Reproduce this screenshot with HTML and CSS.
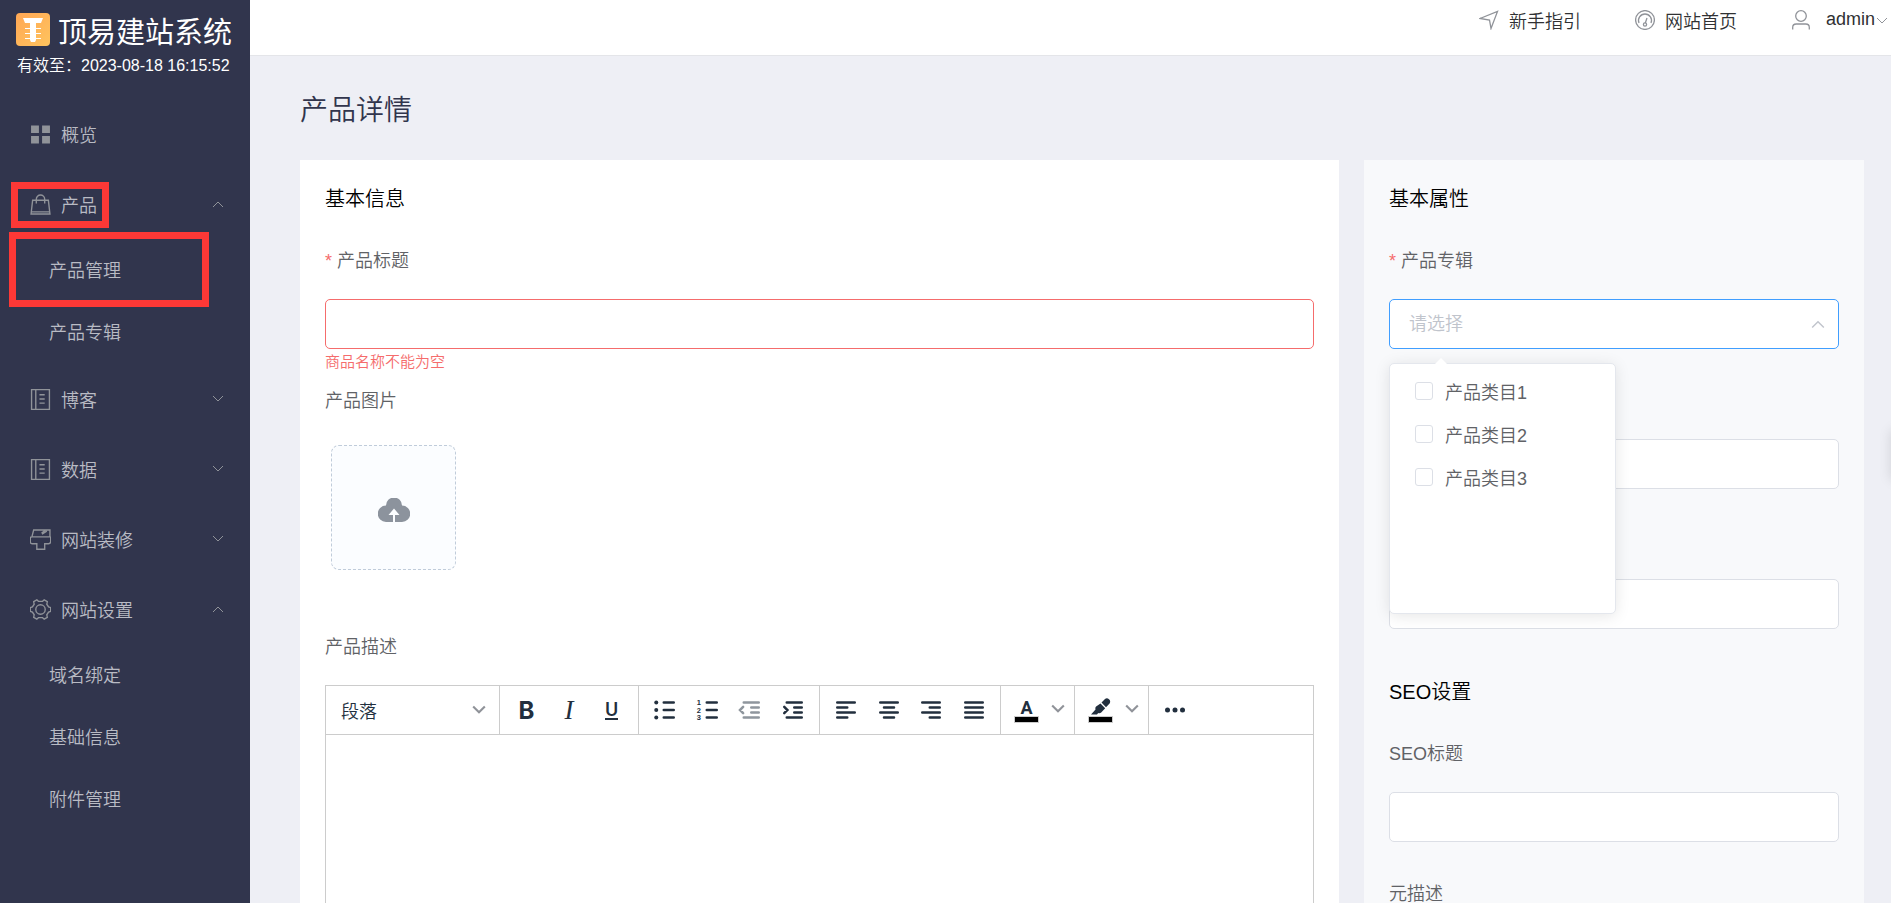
FILE: index.html
```
<!DOCTYPE html>
<html lang="zh-CN">
<head>
    <meta charset="UTF-8">
    <meta name="viewport" content="width=device-width, initial-scale=1.0">
    <title>产品详情</title>
    <link rel="stylesheet" href="styles.css">
</head>
<body>
    <div class="app">
        <aside class="sidebar">
            <div class="brand">
                <svg class="brand-logo" viewBox="0 0 34 34">
                    <defs>
                        <linearGradient id="logoFill" x1="0" y1="0" x2="1" y2="1">
                            <stop offset="0" stop-color="#ffa755"/>
                            <stop offset="1" stop-color="#ffc45e"/>
                        </linearGradient>
                    </defs>
                    <rect width="34" height="33" rx="4" fill="url(#logoFill)"/>
                    <path d="M7 5h20l-2 5h-5v17l-1 2h-4l-1-2V10H9z" fill="#fff"/>
                    <path d="M9 15.500h16M9 20.500h16M9 25.500h16" stroke="#fff" stroke-width="1"/>
                </svg>
                <span class="brand-name">顶易建站系统</span>
            </div>
            <div class="expire">有效至：2023-08-18 16:15:52</div>

            <nav class="menu">
                <a href="#" class="menu-item">
                    <svg class="icon" viewBox="0 0 20 20"><path d="M1 1.500h7.500v7H1zM11.500 1.500H19v7h-7.500zM1 11.500h7.500v7H1zM11.500 11.500H19v7h-7.500z" fill="currentColor" stroke="none"/></svg>
                    <span>概览</span>
                </a>
                <button type="button" class="menu-item">
                    <svg class="icon" viewBox="0 0 20 20"><path d="M2.500 6h15L19 19H1zM6 9V5a4 4 0 0 1 8 0v4M1 17h18"/></svg>
                    <span>产品</span>
                    <svg class="arrow" viewBox="0 0 12 12"><path d="M1 9l5-5 5 5"/></svg>
                    <i class="mark mark-group"></i>
                </button>
                <div class="submenu">
                    <a href="#" class="submenu-item">产品管理<i class="mark mark-link"></i></a>
                    <a href="#" class="submenu-item">产品专辑</a>
                </div>
                <button type="button" class="menu-item">
                    <svg class="icon" viewBox="0 0 20 20"><path d="M1.500.5h17v19h-17zM5.500.5v19M9 5.500h5M9 9.500h5M9 13.500h5"/></svg>
                    <span>博客</span>
                    <svg class="arrow" viewBox="0 0 12 12"><path d="M1 3l5 5 5-5"/></svg>
                </button>
                <button type="button" class="menu-item">
                    <svg class="icon" viewBox="0 0 20 20"><path d="M1.500.5h17v19h-17zM5.500.5v19M9 5.500h5M9 9.500h5M9 13.500h5"/></svg>
                    <span>数据</span>
                    <svg class="arrow" viewBox="0 0 12 12"><path d="M1 3l5 5 5-5"/></svg>
                </button>
                <button type="button" class="menu-item">
                    <svg class="icon" viewBox="0 0 20 20"><path d="M3.500 1h15.500v6.500q.7 0 .7 1v3.500q0 2-2 2H14v5.300H6.500V14H2.300q-2 0-2-2V8.500q0-1 1.500-1zM1.800 7.500H19M15 1l-3.500 2.500.5 1L16 2"/></svg>
                    <span>网站装修</span>
                    <svg class="arrow" viewBox="0 0 12 12"><path d="M1 3l5 5 5-5"/></svg>
                </button>
                <button type="button" class="menu-item">
                    <svg class="icon" viewBox="0 0 20 20"><circle cx="10" cy="10" r="4.500"/><path d="M6.500.8 8 2.200h4L13.500.8 16.500 2.500 16 5l1.700 2.500 2 .8v3.400l-2 .8L16 15l.5 2.500-3 1.700L12 17.800H8l-1.500 1.400-3-1.700L4 15l-1.700-2.500-2-.8V8.300l2-.8L4 5l-.5-2.500z"/></svg>
                    <span>网站设置</span>
                    <svg class="arrow" viewBox="0 0 12 12"><path d="M1 9l5-5 5 5"/></svg>
                </button>
                <div class="submenu">
                    <a href="#" class="submenu-item">域名绑定</a>
                    <a href="#" class="submenu-item">基础信息</a>
                    <a href="#" class="submenu-item">附件管理</a>
                </div>
            </nav>
        </aside>

        <div class="page">
            <header class="topbar">
                <a href="#" class="top-link">
                    <svg class="icon" viewBox="0 0 20 20"><path d="M1 8.500 18.500 1.500 12 18.500 10.500 10z"/></svg>
                    <span>新手指引</span>
                </a>
                <a href="#" class="top-link">
                    <svg class="icon" viewBox="0 0 20 20"><circle cx="10" cy="10" r="9.400"/><path d="M4 13a6.500 6.500 0 1 1 12 0M10.300 13 12 8"/><circle cx="10" cy="14.500" r="1.600"/></svg>
                    <span>网站首页</span>
                </a>
                <button type="button" class="top-link user">
                    <svg class="icon" viewBox="0 0 20 20"><circle cx="10" cy="6" r="5.300"/><path d="M1.700 19.500v-2q0-3.500 3.500-3.500h9.600q3.500 0 3.500 3.500v2"/></svg>
                    <span>admin</span>
                    <svg class="arrow" viewBox="0 0 12 12"><path d="M1 4l5 5 5-5"/></svg>
                </button>
            </header>

            <main class="content">
                <h1>产品详情</h1>
                <form class="columns">
                    <section class="card card-main">
                        <h2>基本信息</h2>
                        <div class="form-item">
                            <label for="title" class="required">产品标题</label>
                            <input type="text" id="title" name="title" class="field is-error">
                            <div class="error">商品名称不能为空</div>
                        </div>
                        <div class="form-item">
                            <label for="picture">产品图片</label>
                            <div class="upload-wrap">
                                <button type="button" id="picture" class="upload">
                                    <svg viewBox="0 0 32 24"><path d="M8 7.500a8 8 0 0 1 16 0A8.200 8.200 0 0 1 24 24h-7V17h4.500L16 10.500 10.500 17H15v7H8A8.200 8.200 0 0 1 8 7.500z"/></svg>
                                </button>
                            </div>
                        </div>
                        <div class="form-item">
                            <label for="description">产品描述</label>
                            <div class="editor">
                                <div class="toolbar">
                                    <div class="group group-format">
                                        <button type="button" class="format">段落
                                            <svg class="caret" viewBox="0 0 12 12"><path d="M1 3l5 5 5-5"/></svg>
                                        </button>
                                    </div>
                                    <div class="group group-3">
                                        <button type="button" class="tool bold">B</button>
                                        <button type="button" class="tool italic">I</button>
                                        <button type="button" class="tool underline"><span>U</span></button>
                                    </div>
                                    <div class="group group-4">
                                        <button type="button" class="tool"><svg viewBox="0 0 24 24"><path d="M11 6h8M11 12h8M11 18h8"/><g class="solid"><circle cx="5" cy="6" r="1.600"/><circle cx="5" cy="12" r="1.600"/><circle cx="5" cy="18" r="1.600"/></g></svg></button>
                                        <button type="button" class="tool"><svg viewBox="0 0 24 24"><path d="M11 6h8M11 12h8M11 18h8"/><g class="digits"><text x="3" y="8">1</text><text x="3" y="14">2</text><text x="3" y="20">3</text></g></svg></button>
                                        <button type="button" class="tool" disabled><svg viewBox="0 0 24 24"><path d="M7 6h12M13 10h6M13 14h6M7 18h12M6.500 9.500 4 12l2.500 2.500"/></svg></button>
                                        <button type="button" class="tool"><svg viewBox="0 0 24 24"><path d="M7 6h12M13 10h6M13 14h6M7 18h12M5 9.500 7.500 12 5 14.500"/></svg></button>
                                    </div>
                                    <div class="group group-4">
                                        <button type="button" class="tool"><svg viewBox="0 0 24 24"><path d="M5 6h14M5 10h8M5 14h14M5 18h8"/></svg></button>
                                        <button type="button" class="tool"><svg viewBox="0 0 24 24"><path d="M5 6h14M8 10h8M5 14h14M8 18h8"/></svg></button>
                                        <button type="button" class="tool"><svg viewBox="0 0 24 24"><path d="M5 6h14M11 10h8M5 14h14M11 18h8"/></svg></button>
                                        <button type="button" class="tool"><svg viewBox="0 0 24 24"><path d="M5 6h14M5 10h14M5 14h14M5 18h14"/></svg></button>
                                    </div>
                                    <div class="group group-color">
                                        <button type="button" class="tool color"><span>A</span></button>
                                        <button type="button" class="more"><svg class="caret" viewBox="0 0 12 12"><path d="M1 3l5 5 5-5"/></svg></button>
                                    </div>
                                    <div class="group group-color">
                                        <button type="button" class="tool color">
                                            <svg class="pen" viewBox="0 0 20 18"><path d="M10.500 4.500 14 1q2-1.600 4 .2t.6 4.300L15 9.200zM9.500 5.500l4.700 4.700-4 4.300q-1.300 1.200-3 .5L6 16.500H0l4.500-5q-.5-2 .6-3z"/></svg>
                                        </button>
                                        <button type="button" class="more"><svg class="caret" viewBox="0 0 12 12"><path d="M1 3l5 5 5-5"/></svg></button>
                                    </div>
                                    <div class="group group-last">
                                        <button type="button" class="tool"><svg viewBox="0 0 24 24"><g class="solid"><circle cx="6" cy="12" r="2"/><circle cx="12" cy="12" r="2"/><circle cx="18" cy="12" r="2"/></g></svg></button>
                                    </div>
                                </div>
                                <textarea id="description" name="description" class="editor-body"></textarea>
                            </div>
                        </div>
                    </section>

                    <section class="card card-side">
                        <h2>基本属性</h2>
                        <div class="form-item">
                            <label for="album" class="required">产品专辑</label>
                            <div class="select-box">
                                <select id="album" name="album" class="field is-focus">
                                    <option value="">请选择</option>
                                </select>
                                <svg class="caret" viewBox="0 0 12 12"><path d="M1 9l5-5 5 5"/></svg>
                                <div class="dropdown">
                                    <label class="option"><input type="checkbox" name="category" value="1">产品类目1</label>
                                    <label class="option"><input type="checkbox" name="category" value="2">产品类目2</label>
                                    <label class="option"><input type="checkbox" name="category" value="3">产品类目3</label>
                                </div>
                            </div>
                        </div>
                        <div class="form-item">
                            <label for="attr1"></label>
                            <input type="text" id="attr1" name="attr1" class="field">
                        </div>
                        <div class="form-item">
                            <label for="attr2"></label>
                            <input type="text" id="attr2" name="attr2" class="field">
                        </div>
                        <h2 class="next-title">SEO设置</h2>
                        <div class="form-item">
                            <label for="seo_title">SEO标题</label>
                            <input type="text" id="seo_title" name="seo_title" class="field">
                        </div>
                        <div class="form-item">
                            <label for="seo_desc">元描述</label>
                            <input type="text" id="seo_desc" name="seo_desc" class="field">
                        </div>
                    </section>
                </form>
            </main>
        </div>
    </div>
    <div class="side-float"></div>
</body>
</html>
```

FILE: styles.css
```
* {
    box-sizing: border-box;
}

body {
    margin: 0;
    font-family: "Liberation Sans", "Noto Sans CJK SC", sans-serif;
    font-size: 18px;
    font-weight: 350;
    color: #606266;
    overflow: hidden;
}

a {
    color: inherit;
    text-decoration: none;
}

button,
input,
select,
textarea {
    font: inherit;
    color: inherit;
}

button {
    padding: 0;
    border: none;
    background: none;
    cursor: pointer;
}

svg {
    flex: none;
    fill: none;
    stroke: currentColor;
}

.app {
    display: flex;
    height: 100vh;
}

/* sidebar */
.sidebar {
    flex: none;
    width: 250px;
    background-color: #31354d;
    color: #b9bbc4;
    overflow: hidden;
}

.brand {
    display: flex;
    align-items: center;
    gap: 8px;
    height: 52px;
    padding: 7px 0 0 16px;
    color: #fff;
}

.brand-logo {
    width: 34px;
    height: 34px;
    stroke: none;
}

.brand-name {
    font-size: 29px;
    font-weight: 400;
    white-space: nowrap;
}

.expire {
    padding-left: 17px;
    font-size: 16px;
    line-height: 27px;
    color: #fff;
    white-space: nowrap;
}

.menu {
    padding-top: 20px;
}

.menu-item {
    position: relative;
    display: flex;
    align-items: center;
    gap: 10px;
    width: 100%;
    height: 70px;
    padding: 0 26px 0 30px;
}

.icon {
    width: 20px;
    height: 20px;
    color: #909399;
    stroke-width: 1.3;
}

.menu-item .icon {
    width: 21px;
    height: 21px;
}

.arrow {
    width: 12px;
    height: 12px;
    color: #909399;
}

.menu-item .arrow {
    margin-left: auto;
}

.submenu {
    padding-top: 1px;
}

.submenu-item {
    position: relative;
    display: block;
    padding-left: 49px;
    line-height: 62px;
}

.mark {
    position: absolute;
    border: 7px solid #fd3836;
}

.mark-group {
    top: 13px;
    left: 11px;
    width: 98px;
    height: 46px;
}

.mark-link {
    top: -8px;
    left: 9px;
    width: 200px;
    height: 75px;
}

/* top bar */
.page {
    flex: 1;
    min-width: 0;
    display: flex;
    flex-direction: column;
    background-color: #eeeff5;
}

.topbar {
    flex: none;
    display: flex;
    justify-content: flex-end;
    align-items: flex-start;
    gap: 54px;
    height: 56px;
    padding-right: 3px;
    background-color: #fff;
    border-bottom: 1px solid #e4e5e9;
    color: #303133;
}

.top-link {
    display: flex;
    align-items: center;
    gap: 10px;
    height: 39px;
}

.user {
    gap: 15px;
}

.user .arrow {
    margin-left: -14px;
}

/* content */
.content {
    flex: 1;
    min-height: 0;
    padding: 35px 27px 0 50px;
    overflow-y: auto;
    scrollbar-width: none;
}

h1 {
    margin: 0 0 29px;
    font-size: 28px;
    font-weight: 350;
    line-height: 40px;
    color: #31354d;
}

.columns {
    display: flex;
    align-items: flex-start;
    gap: 25px;
}

.card {
    padding: 25px;
}

.card-main {
    flex: 1;
    min-width: 0;
    background-color: #fff;
}

.card-side {
    flex: none;
    width: 500px;
    background-color: #f8f9fb;
}

h2 {
    margin: 0 0 23px;
    font-size: 20px;
    font-weight: 350;
    line-height: 28px;
    color: #000;
}

.next-title {
    margin-top: 49px;
}

.form-item {
    position: relative;
    margin-bottom: 27px;
}

.form-item > label {
    display: block;
    height: 50px;
    margin-bottom: 13px;
    line-height: 50px;
}

.required::before {
    content: "*";
    margin-right: 5px;
    color: #f56c6c;
}

.field {
    display: block;
    width: 100%;
    height: 50px;
    padding: 0 19px;
    border: 1px solid #dcdfe6;
    border-radius: 5px;
    background-color: #fff;
    outline: none;
}

.is-error {
    border-color: #f56c6c;
}

.is-focus {
    border-color: #409eff;
    color: #c0c4cc;
    appearance: none;
}

.error {
    position: absolute;
    top: 100%;
    left: 0;
    font-size: 15px;
    line-height: 25px;
    color: #f56c6c;
}

.upload-wrap {
    padding: 6px 6px 25px;
}

.upload {
    display: flex;
    align-items: center;
    justify-content: center;
    width: 125px;
    height: 125px;
    border: 1px dashed #c0ccda;
    border-radius: 8px;
    background-color: #fbfdff;
}

.upload svg {
    width: 32px;
    height: 24px;
    margin-top: 4px;
    fill: #8c939d;
    stroke: none;
}

/* select dropdown */
.select-box {
    position: relative;
}

.caret {
    width: 14px;
    height: 14px;
    color: #909399;
    stroke-width: 1.8;
}

.select-box .caret {
    position: absolute;
    top: 18px;
    right: 14px;
    color: #c0c4cc;
    stroke-width: 1.2;
}

.dropdown {
    position: absolute;
    top: 64px;
    left: 0;
    z-index: 10;
    width: 227px;
    height: 251px;
    padding: 5px 25px;
    border: 1px solid #e4e7ed;
    border-radius: 5px;
    background-color: #fff;
    box-shadow: 0 2px 15px rgba(0, 0, 0, 0.1);
}

.dropdown::before {
    content: "";
    position: absolute;
    top: -6px;
    left: 44px;
    border: 7px solid transparent;
    border-top: none;
    border-bottom-color: #fff;
}

.option {
    display: flex;
    align-items: center;
    gap: 12px;
    height: 43px;
}

.option input {
    width: 18px;
    height: 18px;
    margin: 0;
    border: 1px solid #dcdfe6;
    border-radius: 3px;
    background-color: #fff;
    appearance: none;
}

/* editor */
.editor {
    height: 450px;
    display: flex;
    flex-direction: column;
    border: 1px solid #ccc;
    color: #222f3e;
}

.toolbar {
    display: flex;
    height: 49px;
    border-bottom: 1px solid #ccc;
}

.group {
    display: flex;
    align-items: center;
    padding: 0 5px;
    border-right: 1px solid #ccc;
}

.group-format {
    width: 174px;
}

.format {
    flex: 1;
    display: flex;
    align-items: center;
    justify-content: space-between;
    padding: 0 8px 0 10px;
}

.group-3 {
    width: 139px;
}

.group-4 {
    width: 181px;
}

.group-color {
    width: 74px;
}

.group-last {
    border-right: none;
}

.tool {
    flex: 1;
    display: flex;
    align-items: center;
    justify-content: center;
    height: 42px;
}

.tool svg {
    width: 30px;
    height: 30px;
    stroke-width: 2;
    stroke-linecap: round;
}

.tool:disabled {
    color: #222f3e;
    opacity: 0.5;
}

.tool .solid {
    fill: currentColor;
    stroke: none;
}

.digits {
    font: 700 6px "Liberation Sans", sans-serif;
    fill: currentColor;
    stroke: none;
}

.bold {
    font: 700 24px Inter, sans-serif;
}

.italic {
    font: italic 400 27px "Liberation Serif", serif;
}

.underline {
    font: 600 18px Inter, sans-serif;
}

.underline span {
    line-height: 17px;
    border-bottom: 2px solid currentColor;
}

.color {
    flex-direction: column;
    width: 42px;
    font: 700 18px Roboto, sans-serif;
}

.color span {
    height: 18px;
    line-height: 20px;
}

.color::after {
    content: "";
    width: 23px;
    height: 5px;
    background-color: #000;
    border: 1px solid #ccc;
}

.tool .pen {
    width: 20px;
    height: 18px;
    fill: currentColor;
    stroke: none;
}

.more {
    width: 22px;
    height: 42px;
}

.group-last .tool {
    flex: none;
    width: 42px;
}

.editor-body {
    flex: 1;
    padding: 10px;
    border: none;
    outline: none;
    resize: none;
}

/* collapsed floating panel on the right edge */
.side-float {
    position: fixed;
    top: 430px;
    left: 100%;
    width: 50px;
    height: 50px;
    box-shadow: 0 0 12px rgba(0, 0, 0, 0.12);
}
```
